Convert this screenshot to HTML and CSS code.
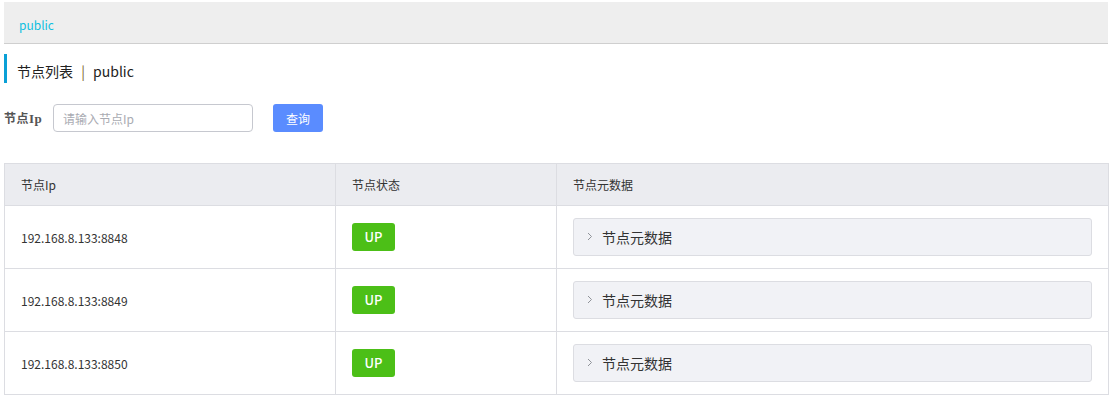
FILE: index.html
```html
<!DOCTYPE html>
<html>
<head>
    <title>节点列表</title>
    <link rel="stylesheet" href="styles.css">
</head>
<body>

<div class="page">
    <div class="crumb-bar">
        <span class="crumb">public</span>
    </div>

    <div class="page-title">
        节点列表 <span class="sep">|</span> public
    </div>

    <div class="search-row">
        <label class="search-label" for="node-ip">节点<span class="latin">Ip</span></label>
        <input type="text" id="node-ip" class="search-input" placeholder="请输入节点Ip">
        <button class="search-btn">查询</button>
    </div>

    <table class="node-table">
        <colgroup>
            <col class="col-ip">
            <col class="col-state">
            <col>
        </colgroup>
        <thead>
            <tr>
                <th>节点Ip</th>
                <th>节点状态</th>
                <th>节点元数据</th>
            </tr>
        </thead>
        <tbody>
            <tr>
                <td>192.168.8.133:8848</td>
                <td><span class="badge-up">UP</span></td>
                <td>
                    <div class="meta-panel">
                        <svg class="chev" width="6" height="9" viewBox="0 0 6 9"><polyline points="1,1 4.5,4.5 1,8" fill="none" stroke="#909399" stroke-width="1"/></svg>
                        节点元数据
                    </div>
                </td>
            </tr>
            <tr>
                <td>192.168.8.133:8849</td>
                <td><span class="badge-up">UP</span></td>
                <td>
                    <div class="meta-panel">
                        <svg class="chev" width="6" height="9" viewBox="0 0 6 9"><polyline points="1,1 4.5,4.5 1,8" fill="none" stroke="#909399" stroke-width="1"/></svg>
                        节点元数据
                    </div>
                </td>
            </tr>
            <tr>
                <td>192.168.8.133:8850</td>
                <td><span class="badge-up">UP</span></td>
                <td>
                    <div class="meta-panel">
                        <svg class="chev" width="6" height="9" viewBox="0 0 6 9"><polyline points="1,1 4.5,4.5 1,8" fill="none" stroke="#909399" stroke-width="1"/></svg>
                        节点元数据
                    </div>
                </td>
            </tr>
        </tbody>
    </table>
</div>

</body>
</html>
```

FILE: styles.css
```css
/* node list page */
body {
    margin: 0;
    font-family: "Noto Sans CJK SC", "Noto Sans", sans-serif;
    color: #333;
    background: #fff;
}
.page {
    padding: 2px 11px 0 4px;
}
.crumb-bar {
    height: 42px;
    box-sizing: border-box;
    background: #eeeeee;
    border-bottom: 1px solid #cfcfcf;
    display: flex;
    align-items: center;
    padding: 3px 0 0 15px;
}
.crumb {
    font-size: 12px;
    color: #10bfe0;
}
.page-title {
    margin-top: 10px;
    height: 29px;
    box-sizing: border-box;
    padding: 5px 0 0 10px;
    line-height: 24px;
    border-left: 3px solid #0aa0d6;
    font-size: 14px;
    color: #222;
}
.page-title .sep {
    color: #7e5f2e;
    margin: 0 5px;
}
.search-row {
    display: flex;
    align-items: center;
    margin-top: 21px;
}
.search-label {
    font-size: 12px;
    font-weight: bold;
    color: #555;
    width: 49px;
    letter-spacing: 0.5px;
}
.search-label .latin {
    font-family: "Liberation Serif", serif;
    font-size: 13px;
}
.search-input {
    width: 200px;
    height: 28px;
    box-sizing: border-box;
    border: 1px solid #c6c8cf;
    border-radius: 4px;
    padding: 0 9px;
    font-family: inherit;
    font-size: 12px;
    outline: none;
}
.search-input::placeholder {
    color: #a9abb2;
}
.search-btn {
    margin-left: 20px;
    width: 50px;
    height: 28px;
    border: none;
    border-radius: 3px;
    background: #5a8cff;
    color: #fff;
    font-family: inherit;
    font-size: 12px;
    cursor: pointer;
}
.node-table {
    margin-top: 31px;
    width: 1105px;
    border-collapse: collapse;
    table-layout: fixed;
    font-size: 12px;
}
.col-ip {
    width: 331px;
}
.col-state {
    width: 221px;
}
.node-table th,
.node-table td {
    border: 1px solid #dcdde2;
    text-align: left;
    padding: 0 16px;
    color: #333;
}
.node-table th {
    height: 41px;
    background: #ebecf0;
    font-weight: normal;
}
.node-table td {
    height: 62px;
}
.badge-up {
    display: inline-block;
    width: 43px;
    height: 28px;
    line-height: 28px;
    text-align: center;
    background: #4cbf17;
    border-radius: 3px;
    color: #fff;
    font-size: 13px;
    font-weight: 500;
    vertical-align: middle;
}
.meta-panel {
    height: 36px;
    box-sizing: content-box;
    display: flex;
    align-items: center;
    background: #f1f2f6;
    border: 1px solid #dcdde2;
    border-radius: 3px;
    padding: 0 0 0 13px;
    font-size: 14px;
    line-height: 32px;
    color: #333;
}
.chev {
    margin-right: 9px;
    margin-top: -2px;
}
```
